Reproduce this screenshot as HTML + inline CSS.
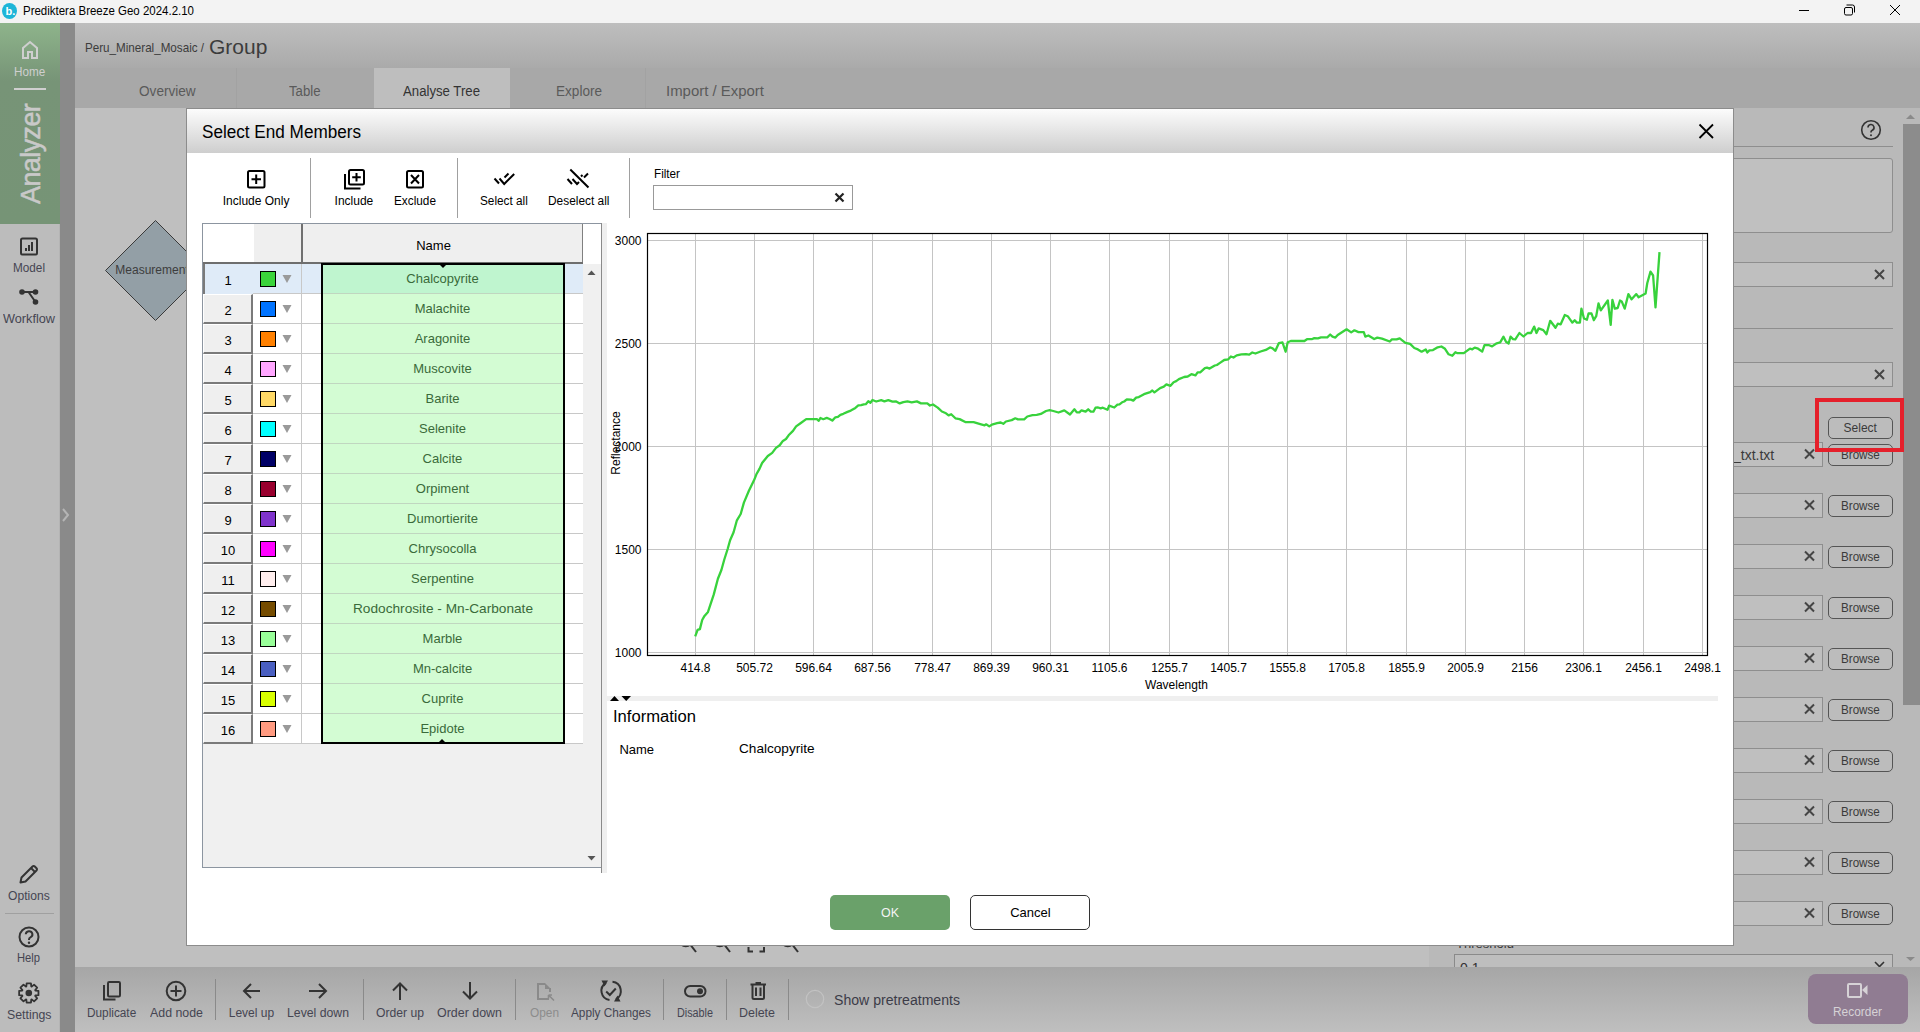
<!DOCTYPE html><html><head><meta charset="utf-8"><style>
*{box-sizing:border-box;margin:0;padding:0}
html,body{width:1920px;height:1032px;overflow:hidden}
body{position:relative;background:#bfbfbf;font-family:"Liberation Sans", sans-serif;color:#000}
.ab{position:absolute}
.t{position:absolute;white-space:nowrap;line-height:1}
svg{position:absolute;overflow:visible}
</style></head><body>

<div class="ab" style="left:0px;top:0px;width:1920px;height:23px;background:#f3f3f3"></div>
<div class="ab" style="left:2px;top:3px;width:15px;height:16px;border-radius:50%;background:#1db5d8"></div>
<div class="t" style="left:5.50px;top:5.69px;font-size:11px;color:#fff;font-weight:bold;">b.</div>
<div class="t" style="left:23.00px;top:5.44px;font-size:12px;color:#000;transform:scaleX(0.9565);transform-origin:0 0;">Prediktera Breeze Geo 2024.2.10</div>
<svg style="left:0;top:0" width="1920" height="23">
<line x1="1799" y1="10.5" x2="1809" y2="10.5" stroke="#000" stroke-width="1"/>
<rect x="1844.5" y="7.5" width="8" height="7.5" rx="1.5" fill="none" stroke="#000" stroke-width="1"/>
<path d="M1846.5,5 H1852.5 Q1854.5,5 1854.5,7 V12.5" fill="none" stroke="#000" stroke-width="1"/>
<path d="M1890,5 L1900,15 M1900,5 L1890,15" stroke="#000" stroke-width="1"/>
</svg>
<div class="ab" style="left:0px;top:23px;width:60px;height:201px;background:linear-gradient(#8eb48b 0px,#779477 58px,#769476 201px)"></div>
<div class="ab" style="left:0px;top:224px;width:59px;height:808px;background:#bcbcbc"></div>
<div class="ab" style="left:59px;top:224px;width:1px;height:808px;background:#b4b4b4"></div>
<div class="ab" style="left:60px;top:23px;width:15px;height:1009px;background:#8a8a8a"></div>
<svg style="left:0;top:0" width="75" height="1032">
<path d="M23,58 V48 L30,42 L37,48 V58 H32 V52 H28 V58 Z" fill="none" stroke="#cfcfcf" stroke-width="2" stroke-linejoin="miter"/>
<rect x="14" y="88" width="32" height="2" fill="#cfcfcf"/>
<rect x="21" y="238.5" width="16" height="16" rx="1.5" fill="none" stroke="#333" stroke-width="2"/>
<rect x="25" y="248" width="2" height="3" fill="#333"/><rect x="28" y="245" width="2" height="6" fill="#333"/><rect x="31" y="242" width="2" height="9" fill="#333"/>
<path d="M22,292 L35.5,292 M28.5,292 L35.5,302" fill="none" stroke="#333" stroke-width="2"/>
<circle cx="22" cy="292" r="2.8" fill="#333"/><circle cx="35.5" cy="292" r="2.8" fill="#333"/><circle cx="35.5" cy="302" r="2.8" fill="#333"/>
<path d="M63,509 L68,515 L63,521" fill="none" stroke="#b5b5b5" stroke-width="2"/>
<path d="M20.5,882.5 L21.5,877.5 L32.5,866.5 a1.6,1.6 0 0 1 2.3,0 l1.7,1.7 a1.6,1.6 0 0 1 0,2.3 L25.5,881.5 Z" fill="none" stroke="#333" stroke-width="2" stroke-linejoin="round"/><path d="M31,868 L35,872" stroke="#333" stroke-width="2"/>
<rect x="5" y="913" width="49" height="1" fill="#a0a0a0"/>
<circle cx="29" cy="937" r="9.5" fill="none" stroke="#333" stroke-width="2"/>
<path d="M25.8,934.3 a3.3,3.2 0 1 1 4.6,3 c-1.1,0.5 -1.4,1 -1.4,2.2 v0.6" fill="none" stroke="#333" stroke-width="2"/>
<circle cx="29" cy="942.8" r="1.2" fill="#333"/>
<g transform="translate(28.8,993)"><path d="M6.55,-2.47 L9.66,-2.16 L9.66,2.16 L6.55,2.47 L6.38,2.89 L8.36,5.30 L5.30,8.36 L2.89,6.38 L2.47,6.55 L2.16,9.66 L-2.16,9.66 L-2.47,6.55 L-2.89,6.38 L-5.30,8.36 L-8.36,5.30 L-6.38,2.89 L-6.55,2.47 L-9.66,2.16 L-9.66,-2.16 L-6.55,-2.47 L-6.38,-2.89 L-8.36,-5.30 L-5.30,-8.36 L-2.89,-6.38 L-2.47,-6.55 L-2.16,-9.66 L2.16,-9.66 L2.47,-6.55 L2.89,-6.38 L5.30,-8.36 L8.36,-5.30 L6.38,-2.89 Z" fill="none" stroke="#333" stroke-width="1.8" stroke-linejoin="round"/><circle cx="0" cy="0" r="3.3" fill="#333"/></g>
</svg>
<div class="t" style="left:14.20px;top:65.84px;font-size:12px;color:#cfcfcf;transform:scaleX(0.9745);transform-origin:0 0;">Home</div>
<div class="t" style="left:-17px;top:139px;width:100px;height:30px;transform:rotate(-90deg);transform-origin:50% 50%;font-size:27px;color:#c9c9c9;text-align:center;letter-spacing:-0.6px;-webkit-text-stroke:0.5px #c9c9c9">Analyzer</div>
<div class="t" style="left:13.20px;top:261.64px;font-size:12px;color:#454552;transform:scaleX(0.9790);transform-origin:0 0;">Model</div>
<div class="t" style="left:2.80px;top:312.84px;font-size:12px;color:#454552;transform:scaleX(1.0585);transform-origin:0 0;">Workflow</div>
<div class="t" style="left:8.25px;top:889.84px;font-size:12px;color:#454552;transform:scaleX(1.0082);transform-origin:0 0;">Options</div>
<div class="t" style="left:17.00px;top:952.34px;font-size:12px;color:#454552;transform:scaleX(0.9316);transform-origin:0 0;">Help</div>
<div class="t" style="left:7.45px;top:1008.54px;font-size:12px;color:#454552;transform:scaleX(1.0263);transform-origin:0 0;">Settings</div>
<div class="ab" style="left:75px;top:23px;width:1845px;height:45px;background:linear-gradient(#bebebe,#aaaaaa)"></div>
<div class="ab" style="left:75px;top:68px;width:1845px;height:40px;background:#a8a8a8"></div>
<div class="ab" style="left:236px;top:68px;width:1px;height:40px;background:#a2a2a2"></div>
<div class="ab" style="left:374px;top:68px;width:136px;height:40px;background:#bebebe"></div>
<div class="ab" style="left:645px;top:68px;width:1px;height:40px;background:#a2a2a2"></div>
<div class="t" style="left:85.00px;top:40.60px;font-size:13px;color:#3c3c3c;transform:scaleX(0.8951);transform-origin:0 0;">Peru_Mineral_Mosaic /</div>
<div class="t" style="left:209.00px;top:35.62px;font-size:21px;color:#3c3c3c;">Group</div>
<div class="t" style="left:139.25px;top:83.85px;font-size:14px;color:#5a5a5a;transform:scaleX(0.9716);transform-origin:0 0;">Overview</div>
<div class="t" style="left:289.25px;top:83.85px;font-size:14px;color:#5a5a5a;transform:scaleX(0.9412);transform-origin:0 0;">Table</div>
<div class="t" style="left:403.00px;top:83.85px;font-size:14px;color:#333;transform:scaleX(0.9423);transform-origin:0 0;">Analyse Tree</div>
<div class="t" style="left:556.00px;top:83.85px;font-size:14px;color:#5a5a5a;transform:scaleX(0.9691);transform-origin:0 0;">Explore</div>
<div class="t" style="left:666.00px;top:83.85px;font-size:14px;color:#5a5a5a;transform:scaleX(1.0674);transform-origin:0 0;">Import / Export</div>
<svg style="left:0;top:0" width="1920" height="1032">
<path d="M155.5,220.5 L205.5,270.5 L155.5,320.5 L105.5,270.5 Z" fill="#939fa6" stroke="#3a3a3a" stroke-width="1"/>
</svg>
<div class="t" style="left:115.30px;top:264.34px;font-size:12px;color:#3d3d3d;">Measurement</div>
<div class="ab" style="left:1429px;top:108px;width:474px;height:859px;background:#b9b9b9"></div>
<div class="ab" style="left:1903px;top:108px;width:17px;height:859px;background:#b9b9b9"></div>
<div class="ab" style="left:1903px;top:124px;width:17px;height:581px;background:#8c8c8c"></div>
<svg style="left:0;top:0" width="1920" height="1032">
<path d="M1906,119 L1910.5,114.5 L1915,119 Z" fill="#8a8a8a"/>
<path d="M1906,957 L1910.5,961 L1915,957 Z" fill="#8a8a8a"/>
<circle cx="1871" cy="130" r="9.3" fill="none" stroke="#333" stroke-width="1.6"/>
<path d="M1868,127.5 a3,3 0 1 1 4.3,2.7 c-0.8,0.4 -1.3,0.9 -1.3,1.8 v0.6" fill="none" stroke="#333" stroke-width="1.6"/>
<circle cx="1871" cy="135.2" r="1" fill="#333"/>
</svg>
<div class="ab" style="left:1440px;top:146px;width:453px;height:1px;background:#8e8e8e"></div>
<div class="ab" style="left:1440px;top:158px;width:453px;height:75px;background:#c0c0c0;border:1px solid #8e8e8e;border-radius:3px"></div>
<div class="ab" style="left:1440px;top:262px;width:453px;height:25px;background:#bfbfbf;border:1px solid #8e8e8e"></div>
<div class="ab" style="left:1440px;top:328px;width:453px;height:1px;background:#8e8e8e"></div>
<div class="ab" style="left:1440px;top:362px;width:453px;height:25px;background:#bfbfbf;border:1px solid #8e8e8e"></div>
<div class="ab" style="left:1440px;top:442px;width:383px;height:25px;background:#bfbfbf;border:1px solid #8e8e8e"></div>
<div class="ab" style="left:1828px;top:443.5px;width:65px;height:22px;border:1px solid #555;border-radius:5px;background:#bcbcbc"></div>
<div class="t" style="left:1840.90px;top:449.34px;font-size:12px;color:#3a3a3a;transform:scaleX(0.9696);transform-origin:0 0;">Browse</div>
<div class="ab" style="left:1440px;top:493px;width:383px;height:25px;background:#bfbfbf;border:1px solid #8e8e8e"></div>
<div class="ab" style="left:1828px;top:494.5px;width:65px;height:22px;border:1px solid #555;border-radius:5px;background:#bcbcbc"></div>
<div class="t" style="left:1840.90px;top:500.34px;font-size:12px;color:#3a3a3a;transform:scaleX(0.9696);transform-origin:0 0;">Browse</div>
<div class="ab" style="left:1440px;top:544px;width:383px;height:25px;background:#bfbfbf;border:1px solid #8e8e8e"></div>
<div class="ab" style="left:1828px;top:545.5px;width:65px;height:22px;border:1px solid #555;border-radius:5px;background:#bcbcbc"></div>
<div class="t" style="left:1840.90px;top:551.34px;font-size:12px;color:#3a3a3a;transform:scaleX(0.9696);transform-origin:0 0;">Browse</div>
<div class="ab" style="left:1440px;top:595px;width:383px;height:25px;background:#bfbfbf;border:1px solid #8e8e8e"></div>
<div class="ab" style="left:1828px;top:596.5px;width:65px;height:22px;border:1px solid #555;border-radius:5px;background:#bcbcbc"></div>
<div class="t" style="left:1840.90px;top:602.34px;font-size:12px;color:#3a3a3a;transform:scaleX(0.9696);transform-origin:0 0;">Browse</div>
<div class="ab" style="left:1440px;top:646px;width:383px;height:25px;background:#bfbfbf;border:1px solid #8e8e8e"></div>
<div class="ab" style="left:1828px;top:647.5px;width:65px;height:22px;border:1px solid #555;border-radius:5px;background:#bcbcbc"></div>
<div class="t" style="left:1840.90px;top:653.34px;font-size:12px;color:#3a3a3a;transform:scaleX(0.9696);transform-origin:0 0;">Browse</div>
<div class="ab" style="left:1440px;top:697px;width:383px;height:25px;background:#bfbfbf;border:1px solid #8e8e8e"></div>
<div class="ab" style="left:1828px;top:698.5px;width:65px;height:22px;border:1px solid #555;border-radius:5px;background:#bcbcbc"></div>
<div class="t" style="left:1840.90px;top:704.34px;font-size:12px;color:#3a3a3a;transform:scaleX(0.9696);transform-origin:0 0;">Browse</div>
<div class="ab" style="left:1440px;top:748px;width:383px;height:25px;background:#bfbfbf;border:1px solid #8e8e8e"></div>
<div class="ab" style="left:1828px;top:749.5px;width:65px;height:22px;border:1px solid #555;border-radius:5px;background:#bcbcbc"></div>
<div class="t" style="left:1840.90px;top:755.34px;font-size:12px;color:#3a3a3a;transform:scaleX(0.9696);transform-origin:0 0;">Browse</div>
<div class="ab" style="left:1440px;top:799px;width:383px;height:25px;background:#bfbfbf;border:1px solid #8e8e8e"></div>
<div class="ab" style="left:1828px;top:800.5px;width:65px;height:22px;border:1px solid #555;border-radius:5px;background:#bcbcbc"></div>
<div class="t" style="left:1840.90px;top:806.34px;font-size:12px;color:#3a3a3a;transform:scaleX(0.9696);transform-origin:0 0;">Browse</div>
<div class="ab" style="left:1440px;top:850px;width:383px;height:25px;background:#bfbfbf;border:1px solid #8e8e8e"></div>
<div class="ab" style="left:1828px;top:851.5px;width:65px;height:22px;border:1px solid #555;border-radius:5px;background:#bcbcbc"></div>
<div class="t" style="left:1840.90px;top:857.34px;font-size:12px;color:#3a3a3a;transform:scaleX(0.9696);transform-origin:0 0;">Browse</div>
<div class="ab" style="left:1440px;top:901px;width:383px;height:25px;background:#bfbfbf;border:1px solid #8e8e8e"></div>
<div class="ab" style="left:1828px;top:902.5px;width:65px;height:22px;border:1px solid #555;border-radius:5px;background:#bcbcbc"></div>
<div class="t" style="left:1840.90px;top:908.34px;font-size:12px;color:#3a3a3a;transform:scaleX(0.9696);transform-origin:0 0;">Browse</div>
<div class="t" style="left:1733.00px;top:447.95px;font-size:14px;color:#3a3a3a;">_txt.txt</div>
<div class="ab" style="left:1828px;top:417px;width:65px;height:22px;border:1px solid #555;border-radius:5px;background:#bcbcbc"></div>
<div class="t" style="left:1843.55px;top:421.84px;font-size:12px;color:#3a3a3a;">Select</div>
<div class="ab" style="left:1815px;top:398px;width:89px;height:54px;border:4.5px solid #e5202b"></div>
<div class="t" style="left:1455.50px;top:937.84px;font-size:12px;color:#3a3a3a;transform:scaleX(1.0867);transform-origin:0 0;">Threshold</div>
<div class="ab" style="left:1454px;top:954px;width:439px;height:30px;background:#bebebe;border:1px solid #8a8a8a"></div>
<div class="t" style="left:1460.00px;top:961.15px;font-size:14px;color:#333;">0.1</div>
<svg style="left:0;top:0" width="1920" height="1032"><path d="M1875.0,270.0 L1884.0,279.0 M1884.0,270.0 L1875.0,279.0" stroke="#454545" stroke-width="2"/><path d="M1875.0,370.0 L1884.0,379.0 M1884.0,370.0 L1875.0,379.0" stroke="#454545" stroke-width="2"/><path d="M1805.0,449.5 L1814.0,458.5 M1814.0,449.5 L1805.0,458.5" stroke="#454545" stroke-width="2"/><path d="M1805.0,500.5 L1814.0,509.5 M1814.0,500.5 L1805.0,509.5" stroke="#454545" stroke-width="2"/><path d="M1805.0,551.5 L1814.0,560.5 M1814.0,551.5 L1805.0,560.5" stroke="#454545" stroke-width="2"/><path d="M1805.0,602.5 L1814.0,611.5 M1814.0,602.5 L1805.0,611.5" stroke="#454545" stroke-width="2"/><path d="M1805.0,653.5 L1814.0,662.5 M1814.0,653.5 L1805.0,662.5" stroke="#454545" stroke-width="2"/><path d="M1805.0,704.5 L1814.0,713.5 M1814.0,704.5 L1805.0,713.5" stroke="#454545" stroke-width="2"/><path d="M1805.0,755.5 L1814.0,764.5 M1814.0,755.5 L1805.0,764.5" stroke="#454545" stroke-width="2"/><path d="M1805.0,806.5 L1814.0,815.5 M1814.0,806.5 L1805.0,815.5" stroke="#454545" stroke-width="2"/><path d="M1805.0,857.5 L1814.0,866.5 M1814.0,857.5 L1805.0,866.5" stroke="#454545" stroke-width="2"/><path d="M1805.0,908.5 L1814.0,917.5 M1814.0,908.5 L1805.0,917.5" stroke="#454545" stroke-width="2"/><path d="M1875,962 L1879.5,966.5 L1884,962" fill="none" stroke="#333" stroke-width="1.6"/></svg>
<div class="ab" style="left:75px;top:967px;width:1845px;height:65px;background:linear-gradient(#a6a6a6,#bfbfbf)"></div>
<svg style="left:0;top:0" width="1920" height="1032">
<g fill="none" stroke="#333" stroke-width="2">
<path d="M104,985 V999.5 H115.5"/>
<rect x="108" y="982" width="12" height="14.5" rx="1.2"/>
<circle cx="176" cy="991" r="9.3"/>
<path d="M176,985.5 V996.5 M170.5,991 H181.5"/>
<path d="M260,991 H244.5 M251,984 L244,991 L251,998"/>
<path d="M309,991 H325.5 M319,984 L326,991 L319,998"/>
<path d="M400,1000 V983.5 M393,990.5 L400,983.5 L407,990.5"/>
<path d="M470,982 V998.5 M463,991.5 L470,998.5 L477,991.5"/>
</g>
<g fill="none" stroke="#8a8a8a" stroke-width="2">
<path d="M545,984 H538 V999 H549 M550,988 V992" />
<path d="M545,983 L551,989 H545 Z" fill="#8a8a8a" stroke="none"/>
<path d="M548.5,995 L554,1000.5 M548.5,995 V998.5 M548.5,995 H552" stroke-width="1.6"/>
</g>
<g fill="none" stroke="#333" stroke-width="2">
<path d="M606,982.8 A9.3,9.3 0 0 0 609.5,1000"/>
<path d="M616,999.2 A9.3,9.3 0 0 0 612.5,981.8"/>
<path d="M606.2,991.5 L609.8,995 L615.8,988.5"/>
</g>
<path d="M601.5,980.5 L608,980.5 L604.5,986.5 Z" fill="#333"/>
<path d="M620.5,1001.5 L614,1001.5 L617.5,995.5 Z" fill="#333"/>
<rect x="685" y="986" width="20.5" height="10.5" rx="5.25" fill="none" stroke="#333" stroke-width="2"/>
<circle cx="700" cy="991.2" r="3" fill="#333"/>
<g fill="none" stroke="#333" stroke-width="2">
<path d="M750.5,984.5 H766 M755.5,983 H761 M752.5,985 V997.5 a1.5,1.5 0 0 0 1.5,1.5 H762.5 a1.5,1.5 0 0 0 1.5,-1.5 V985 M756,987.5 V996 M760.5,987.5 V996"/>
</g>
<circle cx="815" cy="999" r="8.7" fill="none" stroke="#c2c2c2" stroke-width="1.2"/>

</svg>
<div class="ab" style="left:215px;top:979px;width:1px;height:41px;background:#8a8a8a"></div>
<div class="ab" style="left:363px;top:979px;width:1px;height:41px;background:#8a8a8a"></div>
<div class="ab" style="left:515px;top:979px;width:1px;height:41px;background:#8a8a8a"></div>
<div class="ab" style="left:663px;top:979px;width:1px;height:41px;background:#8a8a8a"></div>
<div class="ab" style="left:726px;top:979px;width:1px;height:41px;background:#8a8a8a"></div>
<div class="ab" style="left:788px;top:979px;width:1px;height:41px;background:#8a8a8a"></div>
<div class="t" style="left:87.00px;top:1006.84px;font-size:12px;color:#454552;transform:scaleX(0.9834);transform-origin:0 0;">Duplicate</div>
<div class="t" style="left:149.50px;top:1006.84px;font-size:12px;color:#454552;transform:scaleX(1.0313);transform-origin:0 0;">Add node</div>
<div class="t" style="left:228.75px;top:1006.84px;font-size:12px;color:#454552;">Level up</div>
<div class="t" style="left:287.00px;top:1006.84px;font-size:12px;color:#454552;transform:scaleX(1.0211);transform-origin:0 0;">Level down</div>
<div class="t" style="left:376.00px;top:1006.84px;font-size:12px;color:#454552;transform:scaleX(1.0135);transform-origin:0 0;">Order up</div>
<div class="t" style="left:437.00px;top:1006.84px;font-size:12px;color:#454552;transform:scaleX(1.0366);transform-origin:0 0;">Order down</div>
<div class="t" style="left:529.50px;top:1006.84px;font-size:12px;color:#8c8c8c;transform:scaleX(0.9878);transform-origin:0 0;">Open</div>
<div class="t" style="left:571.30px;top:1006.84px;font-size:12px;color:#454552;transform:scaleX(0.9829);transform-origin:0 0;">Apply Changes</div>
<div class="t" style="left:677.00px;top:1006.84px;font-size:12px;color:#454552;transform:scaleX(0.8993);transform-origin:0 0;">Disable</div>
<div class="t" style="left:739.00px;top:1006.84px;font-size:12px;color:#454552;transform:scaleX(1.0378);transform-origin:0 0;">Delete</div>
<div class="t" style="left:833.70px;top:993.15px;font-size:14px;color:#3c3c48;transform:scaleX(1.0056);transform-origin:0 0;">Show pretreatments</div>
<div class="ab" style="left:1808px;top:974px;width:100px;height:50px;background:#907c92;border-radius:8px"></div>
<div class="ab" style="left:1847px;top:982.5px;width:15px;height:15px;border:2px solid #d6d2d6;border-radius:2px"></div>
<svg style="left:0;top:0" width="1" height="1"><path d="M1862,990 L1867.5,985 V995 Z" fill="#d6d2d6"/></svg>
<div class="t" style="left:1833.30px;top:1005.84px;font-size:12px;color:#d6d2d6;transform:scaleX(0.9927);transform-origin:0 0;">Recorder</div>
<svg style="left:0;top:0" width="1920" height="1032"><g stroke="#333" stroke-width="2" fill="none">
<circle cx="685.8" cy="940" r="6.3"/><path d="M690.5,944.8 L696,952"/>
<circle cx="719.8" cy="940" r="6.3"/><path d="M724.5,944.8 L730,952"/>
<path d="M748.5,947 V951.5 H753 M759.5,951.5 H764 V947"/>
<circle cx="787.8" cy="940" r="6.3"/><path d="M792.5,944.8 L798,952"/>
</g></svg>
<div class="ab" style="left:186px;top:108px;width:1548px;height:838px;background:#fff;border:1px solid #8c8c8c"></div>
<div class="ab" style="left:187px;top:109px;width:1546px;height:44px;background:linear-gradient(#fcfcfc,#cecece)"></div>
<div class="t" style="left:202.00px;top:122.66px;font-size:18px;color:#000;transform:scaleX(0.9517);transform-origin:0 0;">Select End Members</div>
<svg style="left:0;top:0" width="1920" height="1032"><path d="M1699.5,124.5 L1713,138 M1713,124.5 L1699.5,138" stroke="#000" stroke-width="1.8"/></svg>
<svg style="left:0;top:0" width="1920" height="1032">
<g fill="none" stroke="#000" stroke-width="2">
<rect x="248" y="171" width="16.5" height="16.5" rx="1.5"/>
<path d="M256.2,174.5 V184 M251.5,179.2 H261"/>
<path d="M345,174 V188.5 H360.5"/>
<rect x="349" y="170" width="15" height="14.5" rx="1.5"/>
<path d="M356.5,173 V181.5 M352.2,177.2 H360.8"/>
<rect x="407" y="171" width="16" height="16.5" rx="1.5"/>
<path d="M411,175 L419,183.5 M419,175 L411,183.5"/>
</g>
<g fill="none" stroke="#000" stroke-width="2">
<path d="M494.5,178.5 L499,183.5"/>
<path d="M499.5,178.5 L504.2,184 L514.2,174"/>
<path d="M504.5,177.5 L508.5,173.5"/>
<path d="M567.5,179 L572,184"/>
<path d="M572.5,179 L577,184 L579,182"/>
<path d="M581,176.5 L582.5,175 M584,177.5 L588,173.5"/>
<path d="M570.3,169.5 L588.5,187.5"/>
</g>
</svg>
<div class="ab" style="left:310px;top:158px;width:1px;height:60px;background:#a0a0a0"></div>
<div class="ab" style="left:457px;top:158px;width:1px;height:60px;background:#a0a0a0"></div>
<div class="ab" style="left:629px;top:158px;width:1px;height:60px;background:#a0a0a0"></div>
<div class="t" style="left:222.75px;top:194.64px;font-size:12px;color:#000;">Include Only</div>
<div class="t" style="left:334.60px;top:194.64px;font-size:12px;color:#000;">Include</div>
<div class="t" style="left:393.50px;top:194.64px;font-size:12px;color:#000;transform:scaleX(0.9835);transform-origin:0 0;">Exclude</div>
<div class="t" style="left:480.10px;top:194.64px;font-size:12px;color:#000;transform:scaleX(0.9815);transform-origin:0 0;">Select all</div>
<div class="t" style="left:547.75px;top:194.64px;font-size:12px;color:#000;transform:scaleX(0.9914);transform-origin:0 0;">Deselect all</div>
<div class="t" style="left:653.50px;top:167.74px;font-size:12px;color:#000;transform:scaleX(0.9748);transform-origin:0 0;">Filter</div>
<div class="ab" style="left:653px;top:185px;width:200px;height:25px;border:1px solid #999;background:#fff"></div>
<svg style="left:0;top:0" width="1920" height="1032"><path d="M835.5,193.5 L843.5,201.5 M843.5,193.5 L835.5,201.5" stroke="#222" stroke-width="2.2"/></svg>
<div class="ab" style="left:202px;top:223px;width:400px;height:645px;background:#f0f0f0;border:1px solid #8c95a0"></div>
<div class="ab" style="left:203px;top:224px;width:51px;height:40px;background:#fff"></div>
<div class="ab" style="left:254px;top:224px;width:47px;height:39px;background:#efefef"></div>
<div class="ab" style="left:301px;top:224px;width:283px;height:39px;background:#efefef;border-left:2px solid #707070;border-right:2px solid #808080"></div>
<div class="ab" style="left:203px;top:262px;width:380px;height:2px;background:#6e6e6e"></div>
<div class="t" style="left:416.20px;top:238.70px;font-size:13px;color:#000;">Name</div>
<div class="ab" style="left:583px;top:224px;width:18px;height:40px;background:#fff"></div>
<div class="ab" style="left:583px;top:264px;width:18px;height:603px;background:#f0f0f0"></div>
<div class="ab" style="left:253px;top:264px;width:330px;height:30px;background:#dfebf8"></div>
<div class="ab" style="left:253px;top:293px;width:330px;height:1px;background:#c8c8c8"></div>
<div class="ab" style="left:301px;top:264px;width:1px;height:30px;background:#c8c8c8"></div>
<div class="ab" style="left:203px;top:264px;width:50px;height:30px;background:#dfebf8;border-left:2px solid #7a7a7a"></div>
<div class="t" style="left:224.38px;top:274.00px;font-size:13px;color:#000;">1</div>
<div class="ab" style="left:260px;top:271px;width:16px;height:16px;background:#3bd43b;border:1.5px solid #000"></div>
<svg style="left:0;top:0" width="1" height="1"><path d="M282.5,275 L291.5,275 L287,283 Z" fill="#9a9a9a"/></svg>
<div class="ab" style="left:322px;top:264px;width:242px;height:30px;background:#bff5cf"></div>
<div class="ab" style="left:322px;top:293px;width:242px;height:1px;background:#c0d6c0"></div>
<div class="t" style="left:406.37px;top:272.20px;font-size:13px;color:#3a6a3a;">Chalcopyrite</div>
<div class="ab" style="left:253px;top:294px;width:330px;height:30px;background:#fff"></div>
<div class="ab" style="left:253px;top:323px;width:330px;height:1px;background:#c8c8c8"></div>
<div class="ab" style="left:301px;top:294px;width:1px;height:30px;background:#c8c8c8"></div>
<div class="ab" style="left:203px;top:294px;width:50px;height:30px;background:#efefef;border-top:1px solid #fff;border-left:1px solid #fff;border-bottom:2px solid #7a7a7a;border-right:2px solid #7a7a7a"></div>
<div class="t" style="left:224.38px;top:304.00px;font-size:13px;color:#000;">2</div>
<div class="ab" style="left:260px;top:301px;width:16px;height:16px;background:#0073ff;border:1.5px solid #000"></div>
<svg style="left:0;top:0" width="1" height="1"><path d="M282.5,305 L291.5,305 L287,313 Z" fill="#9a9a9a"/></svg>
<div class="ab" style="left:322px;top:294px;width:242px;height:30px;background:#d3fcd3"></div>
<div class="ab" style="left:322px;top:323px;width:242px;height:1px;background:#c0d6c0"></div>
<div class="t" style="left:414.68px;top:302.20px;font-size:13px;color:#3a6a3a;">Malachite</div>
<div class="ab" style="left:253px;top:324px;width:330px;height:30px;background:#fff"></div>
<div class="ab" style="left:253px;top:353px;width:330px;height:1px;background:#c8c8c8"></div>
<div class="ab" style="left:301px;top:324px;width:1px;height:30px;background:#c8c8c8"></div>
<div class="ab" style="left:203px;top:324px;width:50px;height:30px;background:#efefef;border-top:1px solid #fff;border-left:1px solid #fff;border-bottom:2px solid #7a7a7a;border-right:2px solid #7a7a7a"></div>
<div class="t" style="left:224.38px;top:334.00px;font-size:13px;color:#000;">3</div>
<div class="ab" style="left:260px;top:331px;width:16px;height:16px;background:#ff8000;border:1.5px solid #000"></div>
<svg style="left:0;top:0" width="1" height="1"><path d="M282.5,335 L291.5,335 L287,343 Z" fill="#9a9a9a"/></svg>
<div class="ab" style="left:322px;top:324px;width:242px;height:30px;background:#d3fcd3"></div>
<div class="ab" style="left:322px;top:353px;width:242px;height:1px;background:#c0d6c0"></div>
<div class="t" style="left:414.67px;top:332.20px;font-size:13px;color:#3a6a3a;">Aragonite</div>
<div class="ab" style="left:253px;top:354px;width:330px;height:30px;background:#fff"></div>
<div class="ab" style="left:253px;top:383px;width:330px;height:1px;background:#c8c8c8"></div>
<div class="ab" style="left:301px;top:354px;width:1px;height:30px;background:#c8c8c8"></div>
<div class="ab" style="left:203px;top:354px;width:50px;height:30px;background:#efefef;border-top:1px solid #fff;border-left:1px solid #fff;border-bottom:2px solid #7a7a7a;border-right:2px solid #7a7a7a"></div>
<div class="t" style="left:224.38px;top:364.00px;font-size:13px;color:#000;">4</div>
<div class="ab" style="left:260px;top:361px;width:16px;height:16px;background:#ffa6ff;border:1.5px solid #000"></div>
<svg style="left:0;top:0" width="1" height="1"><path d="M282.5,365 L291.5,365 L287,373 Z" fill="#9a9a9a"/></svg>
<div class="ab" style="left:322px;top:354px;width:242px;height:30px;background:#d3fcd3"></div>
<div class="ab" style="left:322px;top:383px;width:242px;height:1px;background:#c0d6c0"></div>
<div class="t" style="left:413.23px;top:362.20px;font-size:13px;color:#3a6a3a;">Muscovite</div>
<div class="ab" style="left:253px;top:384px;width:330px;height:30px;background:#fff"></div>
<div class="ab" style="left:253px;top:413px;width:330px;height:1px;background:#c8c8c8"></div>
<div class="ab" style="left:301px;top:384px;width:1px;height:30px;background:#c8c8c8"></div>
<div class="ab" style="left:203px;top:384px;width:50px;height:30px;background:#efefef;border-top:1px solid #fff;border-left:1px solid #fff;border-bottom:2px solid #7a7a7a;border-right:2px solid #7a7a7a"></div>
<div class="t" style="left:224.38px;top:394.00px;font-size:13px;color:#000;">5</div>
<div class="ab" style="left:260px;top:391px;width:16px;height:16px;background:#ffd966;border:1.5px solid #000"></div>
<svg style="left:0;top:0" width="1" height="1"><path d="M282.5,395 L291.5,395 L287,403 Z" fill="#9a9a9a"/></svg>
<div class="ab" style="left:322px;top:384px;width:242px;height:30px;background:#d3fcd3"></div>
<div class="ab" style="left:322px;top:413px;width:242px;height:1px;background:#c0d6c0"></div>
<div class="t" style="left:425.52px;top:392.20px;font-size:13px;color:#3a6a3a;">Barite</div>
<div class="ab" style="left:253px;top:414px;width:330px;height:30px;background:#fff"></div>
<div class="ab" style="left:253px;top:443px;width:330px;height:1px;background:#c8c8c8"></div>
<div class="ab" style="left:301px;top:414px;width:1px;height:30px;background:#c8c8c8"></div>
<div class="ab" style="left:203px;top:414px;width:50px;height:30px;background:#efefef;border-top:1px solid #fff;border-left:1px solid #fff;border-bottom:2px solid #7a7a7a;border-right:2px solid #7a7a7a"></div>
<div class="t" style="left:224.38px;top:424.00px;font-size:13px;color:#000;">6</div>
<div class="ab" style="left:260px;top:421px;width:16px;height:16px;background:#00ffff;border:1.5px solid #000"></div>
<svg style="left:0;top:0" width="1" height="1"><path d="M282.5,425 L291.5,425 L287,433 Z" fill="#9a9a9a"/></svg>
<div class="ab" style="left:322px;top:414px;width:242px;height:30px;background:#d3fcd3"></div>
<div class="ab" style="left:322px;top:443px;width:242px;height:1px;background:#c0d6c0"></div>
<div class="t" style="left:419.01px;top:422.20px;font-size:13px;color:#3a6a3a;">Selenite</div>
<div class="ab" style="left:253px;top:444px;width:330px;height:30px;background:#fff"></div>
<div class="ab" style="left:253px;top:473px;width:330px;height:1px;background:#c8c8c8"></div>
<div class="ab" style="left:301px;top:444px;width:1px;height:30px;background:#c8c8c8"></div>
<div class="ab" style="left:203px;top:444px;width:50px;height:30px;background:#efefef;border-top:1px solid #fff;border-left:1px solid #fff;border-bottom:2px solid #7a7a7a;border-right:2px solid #7a7a7a"></div>
<div class="t" style="left:224.38px;top:454.00px;font-size:13px;color:#000;">7</div>
<div class="ab" style="left:260px;top:451px;width:16px;height:16px;background:#000066;border:1.5px solid #000"></div>
<svg style="left:0;top:0" width="1" height="1"><path d="M282.5,455 L291.5,455 L287,463 Z" fill="#9a9a9a"/></svg>
<div class="ab" style="left:322px;top:444px;width:242px;height:30px;background:#d3fcd3"></div>
<div class="ab" style="left:322px;top:473px;width:242px;height:1px;background:#c0d6c0"></div>
<div class="t" style="left:422.62px;top:452.20px;font-size:13px;color:#3a6a3a;">Calcite</div>
<div class="ab" style="left:253px;top:474px;width:330px;height:30px;background:#fff"></div>
<div class="ab" style="left:253px;top:503px;width:330px;height:1px;background:#c8c8c8"></div>
<div class="ab" style="left:301px;top:474px;width:1px;height:30px;background:#c8c8c8"></div>
<div class="ab" style="left:203px;top:474px;width:50px;height:30px;background:#efefef;border-top:1px solid #fff;border-left:1px solid #fff;border-bottom:2px solid #7a7a7a;border-right:2px solid #7a7a7a"></div>
<div class="t" style="left:224.38px;top:484.00px;font-size:13px;color:#000;">8</div>
<div class="ab" style="left:260px;top:481px;width:16px;height:16px;background:#99002e;border:1.5px solid #000"></div>
<svg style="left:0;top:0" width="1" height="1"><path d="M282.5,485 L291.5,485 L287,493 Z" fill="#9a9a9a"/></svg>
<div class="ab" style="left:322px;top:474px;width:242px;height:30px;background:#d3fcd3"></div>
<div class="ab" style="left:322px;top:503px;width:242px;height:1px;background:#c0d6c0"></div>
<div class="t" style="left:415.77px;top:482.20px;font-size:13px;color:#3a6a3a;">Orpiment</div>
<div class="ab" style="left:253px;top:504px;width:330px;height:30px;background:#fff"></div>
<div class="ab" style="left:253px;top:533px;width:330px;height:1px;background:#c8c8c8"></div>
<div class="ab" style="left:301px;top:504px;width:1px;height:30px;background:#c8c8c8"></div>
<div class="ab" style="left:203px;top:504px;width:50px;height:30px;background:#efefef;border-top:1px solid #fff;border-left:1px solid #fff;border-bottom:2px solid #7a7a7a;border-right:2px solid #7a7a7a"></div>
<div class="t" style="left:224.38px;top:514.00px;font-size:13px;color:#000;">9</div>
<div class="ab" style="left:260px;top:511px;width:16px;height:16px;background:#7f33cc;border:1.5px solid #000"></div>
<svg style="left:0;top:0" width="1" height="1"><path d="M282.5,515 L291.5,515 L287,523 Z" fill="#9a9a9a"/></svg>
<div class="ab" style="left:322px;top:504px;width:242px;height:30px;background:#d3fcd3"></div>
<div class="ab" style="left:322px;top:533px;width:242px;height:1px;background:#c0d6c0"></div>
<div class="t" style="left:407.10px;top:512.20px;font-size:13px;color:#3a6a3a;">Dumortierite</div>
<div class="ab" style="left:253px;top:534px;width:330px;height:30px;background:#fff"></div>
<div class="ab" style="left:253px;top:563px;width:330px;height:1px;background:#c8c8c8"></div>
<div class="ab" style="left:301px;top:534px;width:1px;height:30px;background:#c8c8c8"></div>
<div class="ab" style="left:203px;top:534px;width:50px;height:30px;background:#efefef;border-top:1px solid #fff;border-left:1px solid #fff;border-bottom:2px solid #7a7a7a;border-right:2px solid #7a7a7a"></div>
<div class="t" style="left:220.77px;top:544.00px;font-size:13px;color:#000;">10</div>
<div class="ab" style="left:260px;top:541px;width:16px;height:16px;background:#ff00ff;border:1.5px solid #000"></div>
<svg style="left:0;top:0" width="1" height="1"><path d="M282.5,545 L291.5,545 L287,553 Z" fill="#9a9a9a"/></svg>
<div class="ab" style="left:322px;top:534px;width:242px;height:30px;background:#d3fcd3"></div>
<div class="ab" style="left:322px;top:563px;width:242px;height:1px;background:#c0d6c0"></div>
<div class="t" style="left:408.54px;top:542.20px;font-size:13px;color:#3a6a3a;">Chrysocolla</div>
<div class="ab" style="left:253px;top:564px;width:330px;height:30px;background:#fff"></div>
<div class="ab" style="left:253px;top:593px;width:330px;height:1px;background:#c8c8c8"></div>
<div class="ab" style="left:301px;top:564px;width:1px;height:30px;background:#c8c8c8"></div>
<div class="ab" style="left:203px;top:564px;width:50px;height:30px;background:#efefef;border-top:1px solid #fff;border-left:1px solid #fff;border-bottom:2px solid #7a7a7a;border-right:2px solid #7a7a7a"></div>
<div class="t" style="left:221.25px;top:574.00px;font-size:13px;color:#000;">11</div>
<div class="ab" style="left:260px;top:571px;width:16px;height:16px;background:#ffeeee;border:1.5px solid #000"></div>
<svg style="left:0;top:0" width="1" height="1"><path d="M282.5,575 L291.5,575 L287,583 Z" fill="#9a9a9a"/></svg>
<div class="ab" style="left:322px;top:564px;width:242px;height:30px;background:#d3fcd3"></div>
<div class="ab" style="left:322px;top:593px;width:242px;height:1px;background:#c0d6c0"></div>
<div class="t" style="left:411.05px;top:572.20px;font-size:13px;color:#3a6a3a;">Serpentine</div>
<div class="ab" style="left:253px;top:594px;width:330px;height:30px;background:#fff"></div>
<div class="ab" style="left:253px;top:623px;width:330px;height:1px;background:#c8c8c8"></div>
<div class="ab" style="left:301px;top:594px;width:1px;height:30px;background:#c8c8c8"></div>
<div class="ab" style="left:203px;top:594px;width:50px;height:30px;background:#efefef;border-top:1px solid #fff;border-left:1px solid #fff;border-bottom:2px solid #7a7a7a;border-right:2px solid #7a7a7a"></div>
<div class="t" style="left:220.77px;top:604.00px;font-size:13px;color:#000;">12</div>
<div class="ab" style="left:260px;top:601px;width:16px;height:16px;background:#754c00;border:1.5px solid #000"></div>
<svg style="left:0;top:0" width="1" height="1"><path d="M282.5,605 L291.5,605 L287,613 Z" fill="#9a9a9a"/></svg>
<div class="ab" style="left:322px;top:594px;width:242px;height:30px;background:#d3fcd3"></div>
<div class="ab" style="left:322px;top:623px;width:242px;height:1px;background:#c0d6c0"></div>
<div class="t" style="left:352.50px;top:602.20px;font-size:13px;color:#3a6a3a;transform:scaleX(1.0511);transform-origin:0 0;">Rodochrosite - Mn-Carbonate</div>
<div class="ab" style="left:253px;top:624px;width:330px;height:30px;background:#fff"></div>
<div class="ab" style="left:253px;top:653px;width:330px;height:1px;background:#c8c8c8"></div>
<div class="ab" style="left:301px;top:624px;width:1px;height:30px;background:#c8c8c8"></div>
<div class="ab" style="left:203px;top:624px;width:50px;height:30px;background:#efefef;border-top:1px solid #fff;border-left:1px solid #fff;border-bottom:2px solid #7a7a7a;border-right:2px solid #7a7a7a"></div>
<div class="t" style="left:220.77px;top:634.00px;font-size:13px;color:#000;">13</div>
<div class="ab" style="left:260px;top:631px;width:16px;height:16px;background:#99ff99;border:1.5px solid #000"></div>
<svg style="left:0;top:0" width="1" height="1"><path d="M282.5,635 L291.5,635 L287,643 Z" fill="#9a9a9a"/></svg>
<div class="ab" style="left:322px;top:624px;width:242px;height:30px;background:#d3fcd3"></div>
<div class="ab" style="left:322px;top:653px;width:242px;height:1px;background:#c0d6c0"></div>
<div class="t" style="left:422.62px;top:632.20px;font-size:13px;color:#3a6a3a;">Marble</div>
<div class="ab" style="left:253px;top:654px;width:330px;height:30px;background:#fff"></div>
<div class="ab" style="left:253px;top:683px;width:330px;height:1px;background:#c8c8c8"></div>
<div class="ab" style="left:301px;top:654px;width:1px;height:30px;background:#c8c8c8"></div>
<div class="ab" style="left:203px;top:654px;width:50px;height:30px;background:#efefef;border-top:1px solid #fff;border-left:1px solid #fff;border-bottom:2px solid #7a7a7a;border-right:2px solid #7a7a7a"></div>
<div class="t" style="left:220.77px;top:664.00px;font-size:13px;color:#000;">14</div>
<div class="ab" style="left:260px;top:661px;width:16px;height:16px;background:#4a5fc1;border:1.5px solid #000"></div>
<svg style="left:0;top:0" width="1" height="1"><path d="M282.5,665 L291.5,665 L287,673 Z" fill="#9a9a9a"/></svg>
<div class="ab" style="left:322px;top:654px;width:242px;height:30px;background:#d3fcd3"></div>
<div class="ab" style="left:322px;top:683px;width:242px;height:1px;background:#c0d6c0"></div>
<div class="t" style="left:412.88px;top:662.20px;font-size:13px;color:#3a6a3a;">Mn-calcite</div>
<div class="ab" style="left:253px;top:684px;width:330px;height:30px;background:#fff"></div>
<div class="ab" style="left:253px;top:713px;width:330px;height:1px;background:#c8c8c8"></div>
<div class="ab" style="left:301px;top:684px;width:1px;height:30px;background:#c8c8c8"></div>
<div class="ab" style="left:203px;top:684px;width:50px;height:30px;background:#efefef;border-top:1px solid #fff;border-left:1px solid #fff;border-bottom:2px solid #7a7a7a;border-right:2px solid #7a7a7a"></div>
<div class="t" style="left:220.77px;top:694.00px;font-size:13px;color:#000;">15</div>
<div class="ab" style="left:260px;top:691px;width:16px;height:16px;background:#d9ff00;border:1.5px solid #000"></div>
<svg style="left:0;top:0" width="1" height="1"><path d="M282.5,695 L291.5,695 L287,703 Z" fill="#9a9a9a"/></svg>
<div class="ab" style="left:322px;top:684px;width:242px;height:30px;background:#d3fcd3"></div>
<div class="ab" style="left:322px;top:713px;width:242px;height:1px;background:#c0d6c0"></div>
<div class="t" style="left:421.54px;top:692.20px;font-size:13px;color:#3a6a3a;">Cuprite</div>
<div class="ab" style="left:253px;top:714px;width:330px;height:30px;background:#fff"></div>
<div class="ab" style="left:253px;top:743px;width:330px;height:1px;background:#c8c8c8"></div>
<div class="ab" style="left:301px;top:714px;width:1px;height:30px;background:#c8c8c8"></div>
<div class="ab" style="left:203px;top:714px;width:50px;height:30px;background:#efefef;border-top:1px solid #fff;border-left:1px solid #fff;border-bottom:2px solid #7a7a7a;border-right:2px solid #7a7a7a"></div>
<div class="t" style="left:220.77px;top:724.00px;font-size:13px;color:#000;">16</div>
<div class="ab" style="left:260px;top:721px;width:16px;height:16px;background:#ff9a80;border:1.5px solid #000"></div>
<svg style="left:0;top:0" width="1" height="1"><path d="M282.5,725 L291.5,725 L287,733 Z" fill="#9a9a9a"/></svg>
<div class="ab" style="left:322px;top:714px;width:242px;height:30px;background:#d3fcd3"></div>
<div class="ab" style="left:322px;top:743px;width:242px;height:1px;background:#c0d6c0"></div>
<div class="t" style="left:420.45px;top:722.20px;font-size:13px;color:#3a6a3a;">Epidote</div>
<div class="ab" style="left:321px;top:263px;width:243.5px;height:481px;border:2px solid #000"></div>
<svg style="left:0;top:0" width="1" height="1"><path d="M438,263 L443,268 L448,263 Z" fill="#000"/><path d="M437,744 L442,739 L447,744 Z" fill="#000"/></svg>
<svg style="left:0;top:0" width="1" height="1"><path d="M587.5,275 L591.5,270.5 L595.5,275 Z" fill="#555"/><path d="M587.5,856 L591.5,860.5 L595.5,856 Z" fill="#555"/></svg>
<div class="ab" style="left:601px;top:223px;width:1px;height:650px;background:#8a8a8a"></div>
<div class="ab" style="left:602px;top:223px;width:5px;height:650px;background:#efefef"></div>
<svg style="left:0;top:0" width="1920" height="1032"><line x1="695.5" y1="234" x2="695.5" y2="655" stroke="#c4c4c4" stroke-width="1"/><line x1="754.5" y1="234" x2="754.5" y2="655" stroke="#c4c4c4" stroke-width="1"/><line x1="813.5" y1="234" x2="813.5" y2="655" stroke="#c4c4c4" stroke-width="1"/><line x1="872.5" y1="234" x2="872.5" y2="655" stroke="#c4c4c4" stroke-width="1"/><line x1="932.5" y1="234" x2="932.5" y2="655" stroke="#c4c4c4" stroke-width="1"/><line x1="991.5" y1="234" x2="991.5" y2="655" stroke="#c4c4c4" stroke-width="1"/><line x1="1050.5" y1="234" x2="1050.5" y2="655" stroke="#c4c4c4" stroke-width="1"/><line x1="1109.5" y1="234" x2="1109.5" y2="655" stroke="#c4c4c4" stroke-width="1"/><line x1="1169.5" y1="234" x2="1169.5" y2="655" stroke="#c4c4c4" stroke-width="1"/><line x1="1228.5" y1="234" x2="1228.5" y2="655" stroke="#c4c4c4" stroke-width="1"/><line x1="1287.5" y1="234" x2="1287.5" y2="655" stroke="#c4c4c4" stroke-width="1"/><line x1="1346.5" y1="234" x2="1346.5" y2="655" stroke="#c4c4c4" stroke-width="1"/><line x1="1406.5" y1="234" x2="1406.5" y2="655" stroke="#c4c4c4" stroke-width="1"/><line x1="1465.5" y1="234" x2="1465.5" y2="655" stroke="#c4c4c4" stroke-width="1"/><line x1="1524.5" y1="234" x2="1524.5" y2="655" stroke="#c4c4c4" stroke-width="1"/><line x1="1583.5" y1="234" x2="1583.5" y2="655" stroke="#c4c4c4" stroke-width="1"/><line x1="1643.5" y1="234" x2="1643.5" y2="655" stroke="#c4c4c4" stroke-width="1"/><line x1="1702.5" y1="234" x2="1702.5" y2="655" stroke="#c4c4c4" stroke-width="1"/><line x1="648" y1="240.5" x2="1707" y2="240.5" stroke="#c4c4c4" stroke-width="1"/><line x1="648" y1="343.5" x2="1707" y2="343.5" stroke="#c4c4c4" stroke-width="1"/><line x1="648" y1="446.5" x2="1707" y2="446.5" stroke="#c4c4c4" stroke-width="1"/><line x1="648" y1="549.5" x2="1707" y2="549.5" stroke="#c4c4c4" stroke-width="1"/><line x1="648" y1="652.5" x2="1707" y2="652.5" stroke="#c4c4c4" stroke-width="1"/><rect x="647.5" y="233.5" width="1060" height="422" fill="none" stroke="#000" stroke-width="1.2"/><polyline points="695.2,636.3 697.6,629.9 699.9,629.1 702.2,620.0 704.5,615.9 708.0,611.9 713.8,594.4 717.9,578.7 721.4,570.0 724.3,559.5 727.8,548.5 730.1,540.3 733.6,532.2 736.9,520.3 740.7,514.0 743.9,502.6 748.9,490.7 753.9,480.6 756.4,474.3 759.6,468.6 762.1,463.0 767.8,456.0 772.2,452.9 776.0,447.9 779.7,445.3 782.9,440.9 786.0,439.0 788.6,435.3 793.0,430.9 796.1,426.4 800.5,423.3 806.2,419.1 816.9,419.1 818.8,420.8 820.4,418.0 823.3,419.2 826.7,417.9 829.6,419.0 832.3,420.6 835.4,417.3 837.9,416.9 840.4,414.8 843.3,413.8 847.5,411.9 850.8,410.6 855.4,407.9 858.3,405.4 861.2,405.2 863.8,404.4 865.8,404.2 868.3,401.2 870.4,402.7 872.5,400.0 876.2,401.5 881.2,400.2 884.4,401.3 888.3,400.2 892.5,401.7 896.2,401.5 899.7,403.4 903.3,402.1 907.5,401.4 911.7,402.4 916.9,401.4 921.0,403.4 927.3,403.4 929.9,405.5 933.0,404.5 937.7,407.6 941.9,411.5 946.0,413.3 948.6,415.4 951.2,414.2 955.4,418.3 959.6,419.1 965.8,422.2 973.6,422.2 979.4,423.8 984.6,425.3 986.1,424.3 989.3,426.4 991.9,424.6 997.1,423.2 1000.7,422.5 1003.3,423.8 1005.9,421.5 1011.7,420.1 1015.3,418.3 1017.9,419.4 1024.2,419.4 1027.3,416.5 1032.5,415.2 1036.7,414.9 1040.8,413.9 1046.0,411.0 1049.7,410.2 1053.3,411.0 1058.5,412.5 1064.3,410.4 1070.0,414.5 1074.4,409.3 1076.8,412.4 1079.4,412.4 1081.5,410.3 1085.6,411.7 1088.2,409.3 1090.8,411.7 1093.4,411.7 1095.5,407.7 1098.1,407.5 1100.7,408.4 1102.8,407.7 1107.5,409.8 1109.1,405.6 1114.3,407.5 1117.4,404.6 1119.5,404.3 1122.1,402.3 1124.2,401.5 1126.8,399.4 1130.9,399.6 1133.3,400.6 1136.1,397.6 1138.8,397.1 1144.0,394.2 1150.2,392.1 1152.3,390.5 1154.4,392.4 1160.1,388.1 1163.8,386.7 1166.4,384.3 1170.5,385.8 1173.6,382.2 1176.2,381.1 1178.9,379.1 1184.1,377.0 1187.7,376.5 1191.4,374.2 1195.5,375.4 1197.6,372.3 1200.2,372.3 1204.9,368.1 1207.0,367.6 1209.6,368.6 1214.8,365.5 1216.9,365.0 1220.0,362.9 1224.2,360.0 1228.3,359.3 1230.9,356.5 1233.5,357.5 1236.7,355.4 1241.4,354.4 1246.0,354.1 1249.2,354.6 1252.3,352.5 1255.4,353.5 1260.6,351.5 1265.8,349.9 1270.0,347.4 1272.6,348.3 1275.4,350.8 1278.9,343.1 1282.5,342.5 1285.6,351.7 1287.7,342.3 1290.8,341.0 1304.4,341.0 1307.0,339.2 1311.7,339.2 1314.3,338.1 1317.9,338.3 1321.0,337.3 1327.3,337.3 1330.2,334.5 1332.5,336.6 1335.4,337.6 1337.7,335.0 1346.6,329.3 1351.2,332.4 1354.4,330.3 1358.5,332.1 1363.8,332.1 1365.3,336.6 1368.4,335.5 1374.2,339.0 1377.3,337.6 1382.0,338.6 1389.8,341.5 1391.9,339.4 1396.6,339.4 1399.7,338.3 1405.4,342.8 1410.1,343.9 1414.3,348.0 1417.9,349.4 1421.6,351.7 1425.7,349.4 1427.3,352.5 1429.4,350.4 1433.0,350.1 1437.7,347.3 1441.4,346.5 1445.0,348.8 1448.6,354.3 1452.3,355.8 1455.4,352.2 1457.5,353.2 1463.8,353.2 1470.0,348.6 1472.3,349.3 1474.7,347.6 1478.1,348.7 1482.2,351.6 1484.5,345.2 1489.2,345.2 1492.1,346.4 1496.7,343.3 1500.2,342.3 1503.5,336.7 1506.0,341.7 1508.6,343.5 1510.5,336.7 1513.0,339.1 1515.3,339.4 1519.4,333.0 1523.5,336.5 1527.6,333.0 1531.0,333.0 1534.2,326.6 1536.5,333.0 1538.6,328.4 1543.3,330.1 1546.5,334.2 1550.2,320.8 1555.5,327.8 1557.8,323.7 1560.7,324.3 1564.8,315.0 1567.7,316.2 1572.3,322.6 1574.7,320.2 1576.9,322.6 1579.9,322.6 1581.4,308.6 1584.0,318.5 1586.9,319.7 1588.6,313.3 1591.5,313.5 1593.8,320.2 1596.2,316.2 1598.5,303.4 1600.8,310.3 1607.8,300.5 1610.7,324.9 1612.4,299.9 1614.8,308.6 1617.7,308.0 1620.0,300.5 1621.7,301.4 1624.7,308.6 1628.4,294.1 1631.6,299.3 1636.3,294.1 1638.6,297.2 1645.6,293.5 1647.3,283.0 1650.5,271.6 1653.1,275.5 1655.5,307.4 1659.5,252.2" fill="none" stroke="#38d23c" stroke-width="2.3" stroke-linejoin="round"/></svg>
<div class="t" style="left:614.80px;top:235.14px;font-size:12px;color:#000;">3000</div>
<div class="t" style="left:614.80px;top:338.14px;font-size:12px;color:#000;">2500</div>
<div class="t" style="left:614.80px;top:441.14px;font-size:12px;color:#000;">2000</div>
<div class="t" style="left:614.80px;top:544.14px;font-size:12px;color:#000;">1500</div>
<div class="t" style="left:614.80px;top:647.14px;font-size:12px;color:#000;">1000</div>
<div class="t" style="left:680.48px;top:661.84px;font-size:12px;color:#000;">414.8</div>
<div class="t" style="left:736.15px;top:661.84px;font-size:12px;color:#000;">505.72</div>
<div class="t" style="left:795.15px;top:661.84px;font-size:12px;color:#000;">596.64</div>
<div class="t" style="left:854.15px;top:661.84px;font-size:12px;color:#000;">687.56</div>
<div class="t" style="left:914.15px;top:661.84px;font-size:12px;color:#000;">778.47</div>
<div class="t" style="left:973.15px;top:661.84px;font-size:12px;color:#000;">869.39</div>
<div class="t" style="left:1032.15px;top:661.84px;font-size:12px;color:#000;">960.31</div>
<div class="t" style="left:1091.59px;top:661.84px;font-size:12px;color:#000;">1105.6</div>
<div class="t" style="left:1151.15px;top:661.84px;font-size:12px;color:#000;">1255.7</div>
<div class="t" style="left:1210.15px;top:661.84px;font-size:12px;color:#000;">1405.7</div>
<div class="t" style="left:1269.15px;top:661.84px;font-size:12px;color:#000;">1555.8</div>
<div class="t" style="left:1328.15px;top:661.84px;font-size:12px;color:#000;">1705.8</div>
<div class="t" style="left:1388.15px;top:661.84px;font-size:12px;color:#000;">1855.9</div>
<div class="t" style="left:1447.15px;top:661.84px;font-size:12px;color:#000;">2005.9</div>
<div class="t" style="left:1511.15px;top:661.84px;font-size:12px;color:#000;">2156</div>
<div class="t" style="left:1565.15px;top:661.84px;font-size:12px;color:#000;">2306.1</div>
<div class="t" style="left:1625.15px;top:661.84px;font-size:12px;color:#000;">2456.1</div>
<div class="t" style="left:1684.15px;top:661.84px;font-size:12px;color:#000;">2498.1</div>
<div class="t" style="left:1145.03px;top:679.34px;font-size:12px;color:#000;">Wavelength</div>
<div class="t" style="left:584px;top:437px;width:64px;height:12px;font-size:12px;transform:rotate(-90deg);transform-origin:50% 50%;text-align:center">Reflectance</div>
<div class="ab" style="left:607px;top:696px;width:1111px;height:5px;background:#efefef"></div>
<svg style="left:0;top:0" width="1" height="1"><path d="M610,701 L614.5,696 L619,701 Z M621.5,696 L631,696 L626.2,701 Z" fill="#000"/></svg>
<div class="t" style="left:613.00px;top:709.26px;font-size:16px;color:#000;transform:scaleX(1.0369);transform-origin:0 0;">Information</div>
<div class="t" style="left:619.40px;top:743.40px;font-size:13px;color:#000;">Name</div>
<div class="t" style="left:739.40px;top:741.50px;font-size:13px;color:#000;transform:scaleX(1.0461);transform-origin:0 0;">Chalcopyrite</div>
<div class="ab" style="left:830px;top:895px;width:120px;height:35px;background:#6aa16a;border-radius:5px"></div>
<div class="t" style="left:881.00px;top:906.30px;font-size:13px;color:#f4f4f4;transform:scaleX(0.9576);transform-origin:0 0;">OK</div>
<div class="ab" style="left:970px;top:895px;width:120px;height:35px;border:1.5px solid #333;border-radius:5px;background:#fff"></div>
<div class="t" style="left:1010.20px;top:906.30px;font-size:13px;color:#000;">Cancel</div>
</body></html>
